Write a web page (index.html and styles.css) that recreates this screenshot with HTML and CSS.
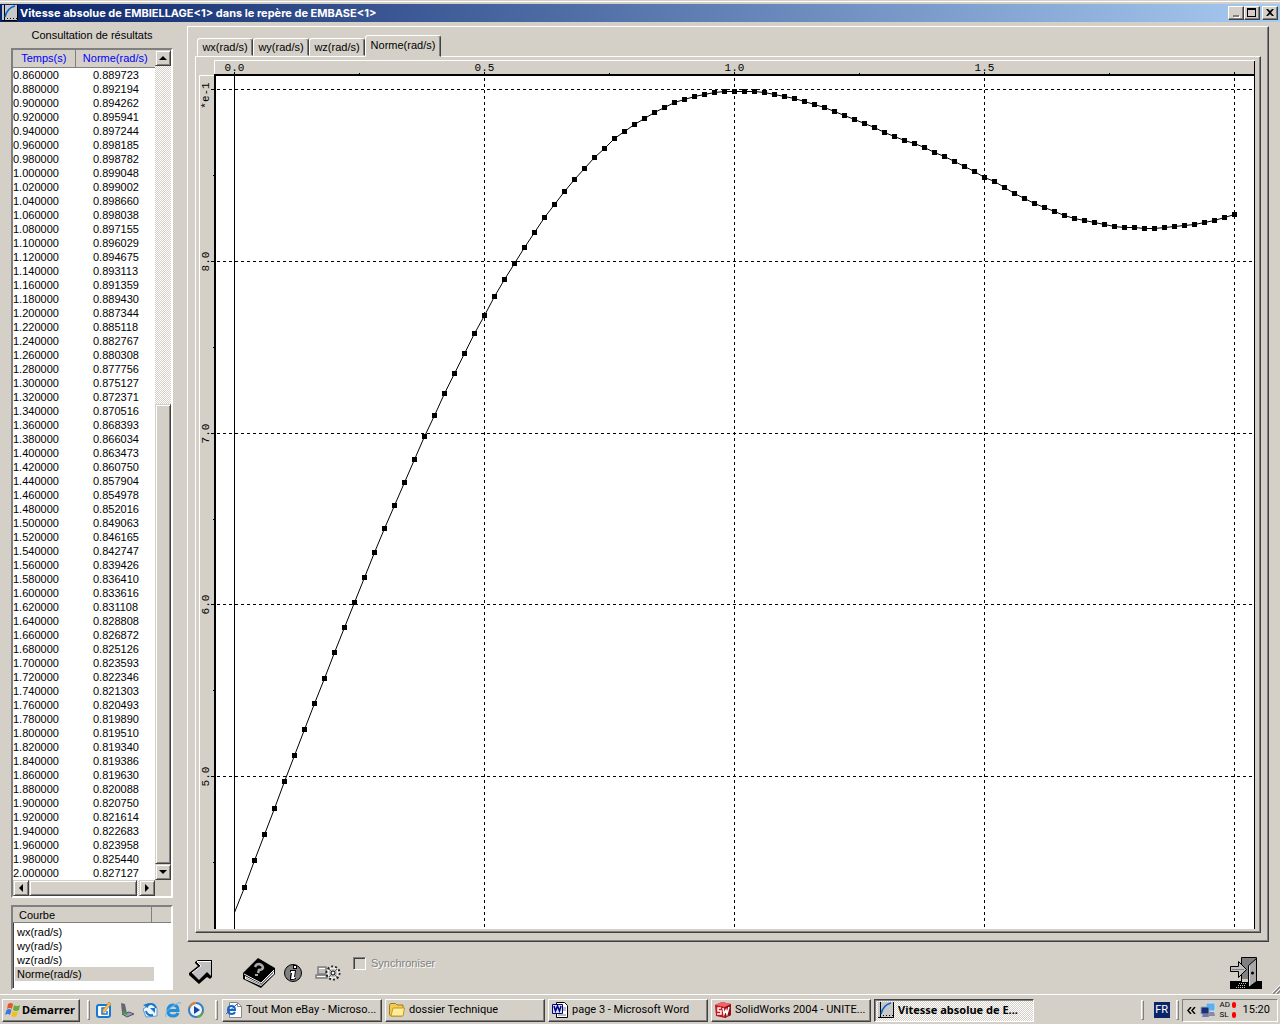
FILE: index.html
```html
<!DOCTYPE html>
<html lang="fr">
<head>
    <meta charset="UTF-8">
    <meta name="viewport" content="width=device-width, initial-scale=1.0">
    <title>Vitesse absolue de EMBIELLAGE&lt;1&gt;</title>
    <link rel="stylesheet" href="styles.css">
</head>
<body>
    <header class="titlebar">
        <svg class="icon16" viewBox="0 0 16 16"><path fill="#c8c8c8" d="M0 0h16v16H0z"/><path fill="none" stroke="#000" d="M2.500 0v15M15.500 0v15.500H0"/><path fill="none" stroke="#000" stroke-dasharray="1 2" d="M2 13.500h13"/><path fill="none" stroke="#06c" stroke-width="1.500" d="M3 12Q5 3 13 1"/></svg>
        <h1>Vitesse absolue de EMBIELLAGE&lt;1&gt; dans le repère de EMBASE&lt;1&gt;</h1>
        <div class="window-buttons">
            <button aria-label="Réduire"><svg viewBox="0 0 12 10"><path fill="#fff" d="M4 8h6v2H4z"/><path fill="#808080" d="M3 7h6v2H3z"/></svg></button>
            <button aria-label="Agrandir"><svg viewBox="0 0 12 10"><path d="M1 0h9v9H1zM2 2v6h7V2z" fill-rule="evenodd"/></svg></button>
            <button class="close" aria-label="Fermer"><svg viewBox="0 0 12 10"><path d="M2 1h2l2 2 2-2h2L7 4.500 10 8H8L6 6 4 8H2l3-3.500z"/></svg></button>
        </div>
    </header>

    <main class="window">
        <aside class="sidebar">
            <h2>Consultation de résultats</h2>
            <div class="results sunken">
                <div class="results-view">
                    <table>
                        <thead><tr><th>Temps(s)</th><th>Norme(rad/s)</th></tr></thead>
                        <tbody id="rows"></tbody>
                    </table>
                </div>
                <div class="scroll vertical">
                    <button aria-label="Monter"><svg viewBox="0 0 8 8"><path d="M4 2l4 4H0z"/></svg></button>
                    <div class="before"></div>
                    <div class="thumb"></div>
                    <button aria-label="Descendre"><svg viewBox="0 0 8 8"><path d="M0 2h8L4 6z"/></svg></button>
                </div>
                <div class="scroll horizontal">
                    <button aria-label="Gauche"><svg viewBox="0 0 8 8"><path d="M6 0v8L2 4z"/></svg></button>
                    <div class="thumb"></div>
                    <button aria-label="Droite"><svg viewBox="0 0 8 8"><path d="M2 0v8l4-4z"/></svg></button>
                </div>
            </div>
            <div class="curves sunken">
                <div class="curves-head"><span>Courbe</span></div>
                <ul>
                    <li>wx(rad/s)</li>
                    <li>wy(rad/s)</li>
                    <li>wz(rad/s)</li>
                    <li class="selected">Norme(rad/s)</li>
                </ul>
            </div>
        </aside>

        <section class="content">
            <div class="panel">
                <div class="tabs" role="tablist">
                    <button role="tab">wx(rad/s)</button>
                    <button role="tab">wy(rad/s)</button>
                    <button role="tab">wz(rad/s)</button>
                    <button role="tab" class="active" aria-selected="true">Norme(rad/s)</button>
                </div>
                <div class="plot"><svg id="chart"></svg></div>
            </div>
            <div class="toolbar">
                <button class="tool-arrow" aria-label="Retour"><svg width="26" height="26" viewBox="0 0 26 26"><path d="M6 2l3-2h14v17l-2 2-3-2-8 7L0 15v-2l9-7-3-3z"/><path fill="#c0c0c0" d="M8 2h14v14l-4-4-8 8-7-7 9-7z"/><path fill="none" stroke="#fff" d="M8 1.500h14M3 13l9-7-4-4"/></svg></button>
                <button class="tool-book" aria-label="Aide"><svg width="34" height="32" viewBox="0 0 34 32"><path d="M1 16L16 1l17 10v6L19 31 1 22z"/><path fill="#fff" d="M3 19l16 8L32 14v3L19 29 3 22z"/><path fill="none" stroke="#888" d="M4 21l15 7 12-12"/><path d="M2 16l17 9L32 11"/><path fill="none" stroke="#fff" d="M2 17l17 9 13-13"/><path fill="none" stroke="#aaa" stroke-width="2.500" d="M13 10q1-3 4-3 4 1 4 4-1 2-4 2l-1 3"/><path fill="#aaa" d="M13 17h3v2h-3z"/></svg></button>
                <button class="tool-info" aria-label="Informations"><svg width="18" height="18" viewBox="0 0 18 18"><circle cx="9" cy="9" r="8.500" fill="#808080" stroke="#000"/><path d="M9 1h4v4H9zM6 6h6l-1 7h1v2l-3 1H6v-3l1-5H6z"/><path fill="#fff" d="M10 2h2v2h-2zM7 7h4l-1 6h2l-2 2H7l1-6H7z"/></svg></button>
                <button class="tool-options" aria-label="Options"><svg width="26" height="18" viewBox="0 0 26 18"><path fill="#c0c0c0" stroke="#808080" stroke-width="1.500" d="M3 3h8v7H3zM1 11h11v3H1z"/><path stroke="#fff" d="M4 4.500h6M2 12.500h8"/><circle cx="18" cy="9" r="6.500" fill="#ddd" stroke="#222" stroke-width="2" stroke-dasharray="2 2"/><circle cx="18" cy="9" r="5" fill="#c0c0c0" stroke="#fff"/><path stroke="#666" d="M14 5l8 8M22 5l-8 8"/><circle cx="18" cy="9" r="2" fill="#fff" stroke="#000"/></svg></button>
                <label class="sync"><input type="checkbox" disabled>Synchroniser</label>
                <button class="tool-exit" aria-label="Quitter"><svg width="32" height="32" viewBox="0 0 32 32"><path d="M0 24h32v8H0z"/><path fill="#808080" stroke="#000" d="M11.500.5h15v24h-15z"/><path fill="#d4d0c8" d="M12 22h6v3h-6z"/><path fill="none" stroke="#c0c0c0" stroke-dasharray="1 1" d="M9 26.500h8M8 28.500h8M6 30.500h9"/><path fill="#a8a8a8" stroke="#000" d="M18.500 8.500l8-7v23l-8 6z"/><path fill="none" stroke="#ddd" d="M19.500 9v20"/><circle cx="22.500" cy="16" r="1.500"/><path fill="#c0c0c0" stroke="#000" d="M.5 9.500h8v-5l8 8-8 8v-6h-8z"/><path stroke="#808080" d="M2 12.500h12"/></svg></button>
            </div>
        </section>
        <svg class="grip" viewBox="0 0 8 9"><path stroke="#fff" d="M0 8l8-8M4 8l4-4"/><path stroke="#808080" stroke-width="1.500" d="M1 9l8-8M5 9l4-4"/></svg>
    </main>

    <footer class="taskbar">
        <button class="start"><svg class="icon16" viewBox="0 0 16 16"><path fill="#e8552a" d="M3 2q3-2 5 0L7 7Q5 5 2 7z"/><path fill="#69ac37" d="M9 3q3 2 6 0l-1 5q-3 2-6 0z"/><path fill="#3c78d8" d="M1.500 8q3-2 5 0L5 13q-2-2-5 0z"/><path fill="#f5be1d" d="M7.500 9q3 2 6 0l-2 5q-3 2-5 0z"/></svg>Démarrer</button>
        <i class="handle"></i>
        <nav class="quick">
            <button aria-label="Outlook Express"><svg class="icon16" viewBox="0 0 16 16"><rect x="1" y="3" width="13" height="12" rx="2" fill="#fff" stroke="#1878d0" stroke-width="2"/><path fill="none" stroke="#1878d0" stroke-width="1.500" d="M10 6H6v6h5V9"/><path fill="#f6c04b" stroke="#865" stroke-width=".5" d="M13 0l2 2-6 8-3 1 1-3z"/></svg></button>
            <button aria-label="Scanner"><svg class="icon16" viewBox="0 0 16 16"><path fill="#667" d="M2 1l4 1 2 10-5-1z"/><path fill="#99b" stroke="#556" d="M3 12l7-2 5 2-7 3z"/><path stroke="#3a3" stroke-width="2" d="M4 10l4 2"/></svg></button>
            <button aria-label="Courrier"><svg class="icon16" viewBox="0 0 16 16"><path fill="#eef7ff" stroke="#5b9bd8" d="M1 7l8-5 6 4v8l-11 1z"/><path fill="none" stroke="#1878d0" stroke-width="2" d="M5 3q7-3 9 3M11 13q-6 1-7-4"/><path fill="#1878d0" d="M8 6h5v5zM1 3l6-2-1 5z"/></svg></button>
            <button aria-label="Internet Explorer"><svg class="icon16" viewBox="0 0 16 16"><path fill="none" stroke="#218fdc" stroke-width="3" d="M3 8.500h10Q13 3 8 3T3 9q0 5 5 5 4 0 5-3"/><path fill="none" stroke="#70b7ea" d="M1 15Q-1 10 8 4t7-2"/></svg></button>
            <button aria-label="Lecteur multimédia"><svg class="icon16" viewBox="0 0 16 16"><circle cx="8" cy="8" r="7" fill="#edf6ff" stroke="#347dc5" stroke-width="2"/><path fill="none" stroke="#e58228" stroke-width="2" d="M2 5q2-4 6-4"/><path fill="none" stroke="#63a63e" stroke-width="2" d="M9 15q4 0 6-5"/><path fill="#1744a0" d="M6 4l6 4-6 4z"/></svg></button>
        </nav>
        <i class="handle"></i>
        <div class="tasks">
            <button><svg class="icon16" viewBox="0 0 16 16"><path fill="#fff" stroke="#888" d="M3.500.5h8l4 4v11h-12z"/><path fill="none" stroke="#888" d="M11.500.5v4h4"/><path fill="none" stroke="#1766c8" stroke-width="2" d="M2 8h7Q9 4 5.500 4T2 8q0 4 4 4 2 0 3-2"/><path stroke="#1766c8" d="M0 12l11-10"/></svg><span>Tout Mon eBay - Microso...</span></button>
            <button><svg class="icon16" viewBox="0 0 16 16"><path fill="#f3cb51" stroke="#a87b10" d="M.5 13V3l1-1.500h5L8 3h6v10l-1 1H2z"/><path fill="#ffed9c" stroke="#c59820" d="M2 14L4 6h11.500L14 14z"/></svg><span>dossier Technique</span></button>
            <button><svg class="icon16" viewBox="0 0 16 16"><path fill="#fff" stroke="#000" d="M4.500.5h8l3 3v12h-11z"/><path stroke="#777" d="M11 6h3M11 8h3M6 13h8"/><path fill="#d9e2ff" stroke="#00007b" d="M.5 2.500h10v9H.5z"/><path fill="none" stroke="#00007b" stroke-width="1.500" d="M2 4l1.500 5 2-5 2 5L9 4"/></svg><span>page 3 - Microsoft Word</span></button>
            <button><svg class="icon16" viewBox="0 0 16 16"><path fill="#c4161c" d="M0 3l7-3 9 2v11l-6 3-9-2z"/><path fill="#e66" d="M0 3l7-3 9 2-6 3z"/><path fill="#8d1014" d="M10 5l6-3v11l-6 3z"/><path fill="none" stroke="#fff" stroke-width="1.500" d="M6 6H3v3h3v3H2M8 6l1 6 2-4 1 4 2-7"/></svg><span>SolidWorks 2004 - UNITE...</span></button>
            <button class="current"><svg class="icon16" viewBox="0 0 16 16"><path fill="#c8c8c8" d="M0 0h16v16H0z"/><path fill="none" stroke="#000" d="M2.500 0v15M15.500 0v15.500H0"/><path fill="none" stroke="#000" stroke-dasharray="1 2" d="M2 13.500h13"/><path fill="none" stroke="#06c" stroke-width="1.500" d="M3 12Q5 3 13 1"/></svg><span>Vitesse absolue de E...</span></button>
        </div>
        <i class="handle"></i>
        <span class="lang">FR</span>
        <i class="handle"></i>
        <div class="tray">
            <svg width="9" height="7" viewBox="0 0 9 7"><path fill="none" stroke="#000" stroke-width="1.500" d="M4 0L1 3.500 4 7M8 0L5 3.500 8 7"/></svg>
            <svg class="icon16" viewBox="0 0 16 16"><path fill="#58b2ef" stroke="#cde" d="M6 1h9v8H6z"/><path fill="#88a" d="M8 10h6l1 4H7z"/><path fill="#1b2e78" stroke="#9ab" d="M1 5h8v7H1z"/><path fill="#77a" d="M3 12h5l1 3H2z"/></svg>
            <div class="adsl">
                <span>AD</span><b></b>
                <span>SL</span><b></b>
            </div>
            <time>15:20</time>
        </div>
    </footer>
    <script src="script.js"></script>
</body>
</html>
```

FILE: styles.css
```css
* {
    box-sizing: border-box;
}
body {
    margin: 0;
    height: 100vh;
    min-height: 480px;
    display: flex;
    flex-direction: column;
    background: #d4d0c8;
    color: #000;
    font: 11px/14px "Liberation Sans", Arial, sans-serif;
    overflow: hidden;
}
button {
    margin: 0;
    padding: 0;
    border: 0;
    background: #d4d0c8;
    color: #000;
    font: inherit;
}
svg {
    display: block;
    flex: none;
}
.icon16 {
    width: 16px;
    height: 16px;
}
.sunken {
    background: #fff;
    border: 2px solid;
    border-color: #808080 #fff #fff #808080;
    box-shadow: inset 1px 1px #404040;
}

/* Barre de titre */
.titlebar {
    flex: none;
    display: flex;
    align-items: center;
    gap: 2px;
    height: 22px;
    padding: 4px 2px 0;
    background: linear-gradient(90deg, #0a246a, #a6caf0) 0 4px no-repeat, linear-gradient(#d4d0c8 1px, #fff 1px, #fff 2px, #d4d0c8 2px);
}
.titlebar h1 {
    flex: 1;
    margin: 0;
    color: #fff;
    font: bold 11px/18px Inter, Tahoma, sans-serif;
}
.window-buttons {
    display: flex;
}
.window-buttons button {
    display: flex;
    align-items: center;
    justify-content: center;
    width: 16px;
    height: 14px;
    border: 1px solid;
    border-color: #fff #404040 #404040 #fff;
    box-shadow: inset -1px -1px #808080;
}
.window-buttons svg {
    width: 12px;
    height: 10px;
}
.window-buttons .close {
    margin-left: 2px;
}

.window {
    flex: 1;
    min-height: 0;
    position: relative;
    display: flex;
    gap: 14px;
}
.grip {
    position: absolute;
    right: 0;
    bottom: 0;
    width: 8px;
    height: 9px;
}

/* Colonne des résultats */
.sidebar {
    flex: none;
    display: flex;
    flex-direction: column;
    width: 173px;
    padding: 0 0 4px 11px;
}
.sidebar h2 {
    margin: 0;
    font-size: 11px;
    font-weight: normal;
    line-height: 26px;
    text-align: center;
}
.results {
    flex: 1;
    min-height: 0;
    display: grid;
    grid-template: minmax(0, 1fr) 16px / minmax(0, 1fr) 16px;
    background: #d4d0c8;
}
.results-view {
    overflow: hidden;
    background: #fff;
}
table {
    width: 100%;
    border-collapse: collapse;
    table-layout: fixed;
}
th {
    height: 17px;
    padding: 0;
    background: #d4d0c8;
    border-bottom: 1px solid #808080;
    color: #00f;
    font-weight: normal;
}
th:first-child {
    width: 62px;
    border-right: 1px solid #808080;
}
td {
    height: 14px;
    padding: 0;
}
td:last-child {
    padding-left: 18px;
}
.scroll {
    display: flex;
    background: repeating-conic-gradient(#fff 0 25%, #d4d0c8 0 50%) 0 0 / 2px 2px;
}
.scroll button, .scroll .thumb {
    background: #d4d0c8;
    border: 1px solid;
    border-color: #d4d0c8 #404040 #404040 #d4d0c8;
    box-shadow: inset 1px 1px #fff, inset -1px -1px #808080;
}
.scroll button {
    flex: none;
    display: flex;
    align-items: center;
    justify-content: center;
    width: 16px;
    height: 16px;
}
.scroll button svg {
    width: 8px;
    height: 8px;
}
.vertical {
    flex-direction: column;
}
.vertical .before {
    flex: 34;
}
.vertical .thumb {
    flex: 46;
}
.horizontal .thumb {
    flex: 1;
    margin-right: 2px;
}
.curves {
    margin-top: 7px;
    height: 85px;
}
.curves-head {
    display: flex;
    height: 16px;
    background: #d4d0c8;
    border-bottom: 1px solid #808080;
}
.curves-head span {
    width: 139px;
    padding: 1px 6px;
    border-right: 1px solid #808080;
}
.curves ul {
    margin: 2px 17px 0 2px;
    padding: 0;
    list-style: none;
}
.curves li {
    padding: 0 2px;
}
.curves .selected {
    background: #d4d0c8;
}

/* Zone du graphique */
.content {
    flex: 1;
    min-width: 0;
    display: flex;
    flex-direction: column;
    padding: 4px 11px 0 0;
}
.panel {
    flex: 1;
    min-height: 0;
    display: flex;
    flex-direction: column;
    padding: 8px 7px;
    border: 1px solid;
    border-color: #fff #404040 #404040 #fff;
    box-shadow: inset -1px -1px #808080;
}
.tabs {
    flex: none;
    display: flex;
    align-items: flex-end;
    height: 21px;
    padding-left: 2px;
}
.tabs button {
    width: 56px;
    height: 18px;
    border: 1px solid;
    border-color: #fff #404040 transparent #fff;
    border-radius: 3px 3px 0 0;
    box-shadow: inset -1px 0 #808080;
}
.tabs .active {
    width: 76px;
    height: 22px;
    margin-bottom: -1px;
    padding-bottom: 2px;
    position: relative;
}
.plot {
    flex: 1;
    min-height: 0;
    padding: 0 5px 3px 1px;
    border: 1px solid;
    border-color: #fff #404040 #404040 #fff;
    box-shadow: inset -1px -1px #808080;
}
.plot svg {
    width: 100%;
    height: 100%;
}
.plot text {
    font: 11px "Liberation Mono", monospace;
    text-anchor: middle;
}

.toolbar {
    flex: none;
    display: flex;
    align-items: center;
    height: 52px;
    padding: 10px 7px 0 2px;
}
.tool-book {
    margin-left: 27px;
}
.tool-info {
    margin-left: 8px;
}
.tool-options {
    margin-left: 13px;
}
.sync {
    align-self: flex-start;
    display: flex;
    align-items: center;
    gap: 5px;
    margin: 4px auto 0 12px;
    color: #808080;
    text-shadow: 1px 1px #fff;
}
.sync input {
    appearance: none;
    width: 13px;
    height: 13px;
    margin: 0;
    border: 1px solid;
    border-color: #808080 #fff #fff #808080;
    box-shadow: inset 1px 1px #404040;
}

/* Barre des tâches */
.taskbar {
    flex: none;
    display: flex;
    align-items: center;
    height: 30px;
    padding: 1px 2px 0;
    border-top: 1px solid #fff;
    font: 11px/14px Roboto, Tahoma, sans-serif;
}
.start, .tasks button {
    display: flex;
    align-items: center;
    height: 23px;
    border: 1px solid;
    border-color: #fff #404040 #404040 #fff;
    box-shadow: inset -1px -1px #808080;
}
.start, .tasks .current {
    font-family: "Noto Sans", Tahoma, sans-serif;
    font-weight: bold;
}
.start {
    flex: none;
    width: 78px;
    padding-left: 2px;
    gap: 1px;
}
.handle {
    flex: none;
    width: 3px;
    height: 20px;
    margin-left: 7px;
    border: 1px solid;
    border-color: #fff #808080 #808080 #fff;
}
.quick {
    flex: none;
    display: flex;
    gap: 7px;
    width: 125px;
    padding-left: 6px;
}
.quick + .handle {
    margin-left: 0;
}
.tasks {
    flex: 1;
    min-width: 0;
    display: flex;
    gap: 3px;
    margin-left: 4px;
}
.tasks button {
    flex: 0 1 160px;
    min-width: 0;
    gap: 4px;
    padding: 0 2px 0 3px;
    white-space: nowrap;
}
.tasks span {
    overflow: hidden;
}
.tasks .current {
    border-color: #404040 #fff #fff #404040;
    box-shadow: inset 1px 1px #808080;
    background: repeating-conic-gradient(#fff 0 25%, #d4d0c8 0 50%) 0 0 / 2px 2px;
}
.lang {
    margin-left: 10px;
    width: 16px;
    background: #0a246a;
    color: #fff;
    line-height: 16px;
    text-align: center;
}
.lang + .handle {
    margin-left: 6px;
}
.tray {
    flex: none;
    display: flex;
    align-items: center;
    gap: 4px;
    height: 23px;
    margin-left: 3px;
    padding: 0 7px 0 4px;
    border: 1px solid;
    border-color: #808080 #fff #fff #808080;
}
.adsl {
    display: grid;
    grid-template-columns: 12px 4px;
    align-items: center;
    font-size: 8px;
    line-height: 10px;
}
.adsl b {
    width: 4px;
    height: 6px;
    border-radius: 2px;
    background: #f00;
}
.tray time {
    margin-left: 3px;
}
```

FILE: script.js
```javascript
const step = 0.02;
const values = [
    0.4210, 0.4356, 0.4513, 0.4664, 0.4816, 0.4973, 0.5124, 0.5276, 0.5427, 0.5573,
    0.5724, 0.5870, 0.6015, 0.6161, 0.6306, 0.6446, 0.6580, 0.6714, 0.6848, 0.6982,
    0.7104, 0.7232, 0.7349, 0.7465, 0.7582, 0.7687, 0.7797, 0.7896, 0.7989, 0.8083,
    0.8170, 0.8257, 0.8333, 0.8409, 0.8479, 0.8543, 0.8607, 0.8659, 0.8712, 0.8758,
    0.8799, 0.8834, 0.8869,
    0.889723, 0.892194, 0.894262, 0.895941, 0.897244, 0.898185, 0.898782, 0.899048,
    0.899002, 0.898660, 0.898038, 0.897155, 0.896029, 0.894675, 0.893113, 0.891359,
    0.889430, 0.887344, 0.885118, 0.882767, 0.880308, 0.877756, 0.875127, 0.872371,
    0.870516, 0.868393, 0.866034, 0.863473, 0.860750, 0.857904, 0.854978, 0.852016,
    0.849063, 0.846165, 0.842747, 0.839426, 0.836410, 0.833616, 0.831108, 0.828808,
    0.826872, 0.825126, 0.823593, 0.822346, 0.821303, 0.820493, 0.819890, 0.819510,
    0.819340, 0.819386, 0.819630, 0.820088, 0.820750, 0.821614, 0.822683, 0.823958,
    0.825440, 0.827127
];
const firstRow = 43;

document.getElementById('rows').innerHTML = values.slice(firstRow).map((v, i) =>
    `<tr><td>${((firstRow + i) * step).toFixed(6)}</td><td>${v.toFixed(6)}</td></tr>`
).join('');

const chart = document.getElementById('chart');

function drawChart() {
    const w = chart.clientWidth;
    const h = chart.clientHeight;
    const left = 18, top = 18;
    const x = t => Math.round(37 + t * (w - 58) / 2) + 0.5;
    const y = v => Math.round(32 + (0.9 - v) / 0.4889 * (h - 32)) + 0.5;
    const line = (x1, y1, x2, y2, extra = '') =>
        `<line x1="${x1}" y1="${y1}" x2="${x2}" y2="${y2}" stroke="#000" ${extra}/>`;
    const dash = 'stroke-dasharray="3 3"';

    let out = `<rect x="${left}" y="${top}" width="${w - left}" height="${h - top}" fill="#fff"/>`;
    out += `<path d="M17.5 18V3.5H${w}M2.5 ${h}V18.5H17" fill="none" stroke="#fff"/>`;
    out += `<path d="M18 ${h}V18H${w}" fill="none" stroke="#000" stroke-width="2"/>`;
    out += line(w - 0.5, 4, w - 0.5, h);

    // graduations et grille verticale
    for (let t = 0; t <= 2; t += 0.25) {
        if (t % 0.5) {
            out += line(x(t), 16, x(t), 18);
            continue;
        }
        out += line(x(t), 15, x(t), h, t ? dash : '');
        if (t < 2) out += `<text x="${x(t)}" y="14">${t.toFixed(1)}</text>`;
    }
    // grille horizontale
    for (let n = 5; n <= 9; n++) {
        const py = y(n / 10);
        out += line(14, py, w, py, dash);
        out += line(16, y((n - 0.5) / 10), 18, y((n - 0.5) / 10));
        const label = n === 9 ? '*e-1' : n.toFixed(1);
        const ly = n === 9 ? py + 6 : py;
        out += `<text transform="translate(12 ${ly}) rotate(-90)">${label}</text>`;
    }
    // courbe
    out += `<polyline fill="none" stroke="#000" points="${values.map((v, i) => x(i * step) + ',' + y(v)).join(' ')}"/>`;
    values.forEach((v, i) => {
        if (i) out += `<rect x="${x(i * step) - 2.5}" y="${y(v) - 2.5}" width="5" height="5"/>`;
    });
    chart.innerHTML = out;
}

drawChart();
window.addEventListener('resize', drawChart);
```
